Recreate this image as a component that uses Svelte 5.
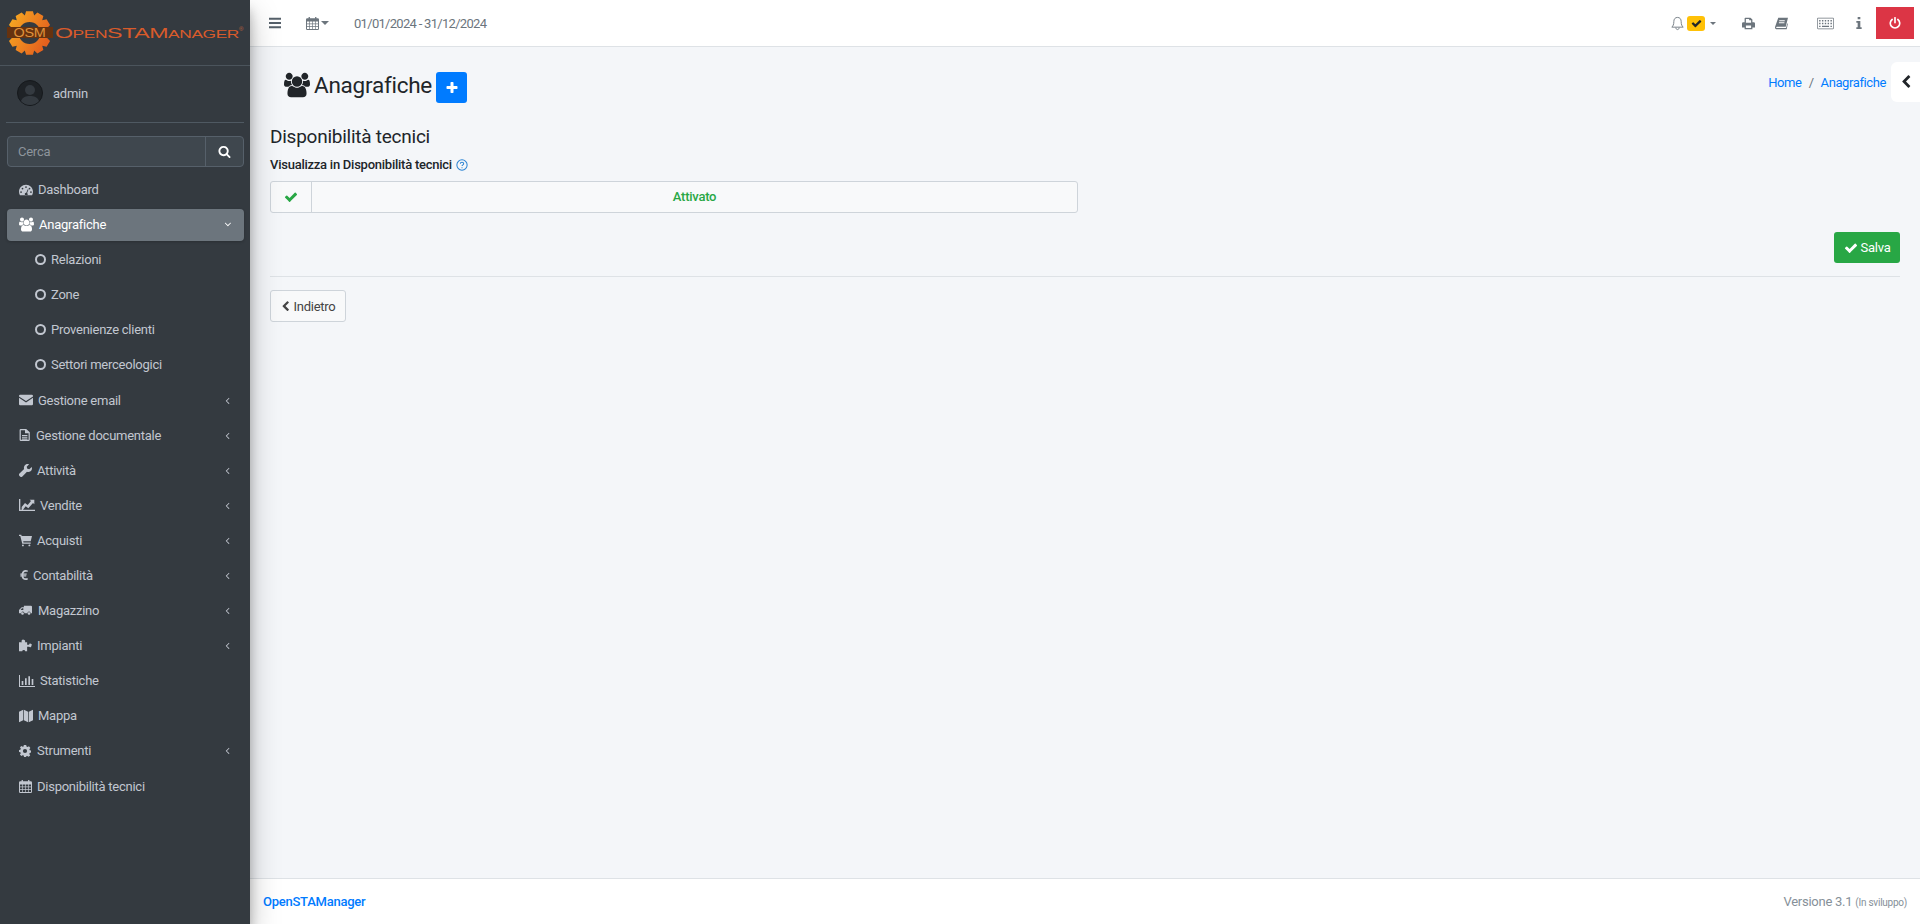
<script>
  const icons = {
    dashboard: { vb: '0 0 24 20', w: 14, d: 'M12 1C5.4 1 0 6.4 0 13c0 2.200.6 4.200 1.600 6h20.800c1-1.800 1.600-3.800 1.600-6 0-6.600-5.400-12-12-12zM12 3.500a1.500 1.500 0 1 1 0 3 1.500 1.500 0 0 1 0-3zM6 6a1.500 1.500 0 1 1 0 3 1.500 1.500 0 0 1 0-3zM3.500 12a1.500 1.500 0 1 1 0 3 1.500 1.500 0 0 1 0-3zM20.500 12a1.500 1.500 0 1 1 0 3 1.500 1.500 0 0 1 0-3zM18 6a1.500 1.500 0 1 1 0 3 1.500 1.500 0 0 1 0-3zM15 8.500l1.300.6-2.400 6a2.500 2.500 0 1 1-1.400-.5z' },
    users: { vb: '0 0 1920 1792', w: 15, d: 'M593 896q-162 5-265 128h-134q-82 0-138-40.500t-56-118.500q0-353 124-353 6 0 43.500 21t97.500 42.500 119 21.500q67 0 133-23-5 37-5 66 0 139 81 256zm1071 637q0 120-73 189.500t-194 69.500h-874q-121 0-194-69.500t-73-189.500q0-53 3.500-103.500t14-109 26.500-108.500 43-97.500 62-81 85.500-53.500 111.500-20q10 0 43 21.500t73 48 107 48 135 21.500 135-21.500 107-48 73-48 43-21.500q61 0 111.500 20t85.500 53.500 62 81 43 97.500 26.500 108.500 14 109 3.500 103.500zm-1024-1277q0 106-75 181t-181 75-181-75-75-181 75-181 181-75 181 75 75 181zm704 384q0 159-112.500 271.500t-271.500 112.500-271.500-112.500-112.500-271.500 112.500-271.500 271.500-112.500 271.500 112.500 112.500 271.500zm576 225q0 78-56 118.500t-138 40.500h-134q-103-123-265-128 81-117 81-256 0-29-5-66 66 23 133 23 59 0 119-21.500t97.500-42.500 43.500-21q124 0 124 353zm-128-609q0 106-75 181t-181 75-181-75-75-181 75-181 181-75 181 75 75 181z' },
    envelope: { vb: '0 0 24 20', w: 14, d: 'M2 1h20a2 2 0 0 1 2 2v.8l-12 8-12-8V3a2 2 0 0 1 2-2zM0 6.200l12 8 12-8V17a2 2 0 0 1-2 2H2a2 2 0 0 1-2-2z' },
    doc: { vb: '0 0 18 20', w: 12, d: 'M2 0h9l6 5.500V18a2 2 0 0 1-2 2H2a2 2 0 0 1-2-2V2a2 2 0 0 1 2-2zm0 2v16h13V7h-6V2zm2 8h9v1.500H4zm0 3h9v1.500H4zm0 3h9v1.500H4z' },
    wrench: { vb: '0 0 20 20', w: 13, d: 'M19.600 4.500l-3.800 3.700-3-1-1-3L15.500.5C13-.5 10 .2 8.500 2.500 7.400 4.200 7.300 6 7.900 7.700L.8 14.800a2.500 2.500 0 0 0 0 3.600l.8.800a2.500 2.500 0 0 0 3.600 0l7.100-7.100c1.700.6 3.800.4 5.400-.8 2-1.500 2.800-4.300 1.900-6.800z' },
    chart: { vb: '0 0 24 18', w: 16, d: 'M0 0h2v16h22v2H0zM4 12l5-6 4 3 5-6-2-2h7v7l-2-2-7 8-4-3-4 5H4z' },
    cart: { vb: '0 0 20 18', w: 13, d: 'M0 0h3.500l.6 2H20l-2 8H6.500l.4 2H18v2H5L2 2H0zM6 15a1.500 1.500 0 1 1 0 3 1.500 1.500 0 0 1 0-3zM16 15a1.500 1.500 0 1 1 0 3 1.500 1.500 0 0 1 0-3z' },
    truck: { vb: '0 0 24 18', w: 13, d: 'M9 0h13a2 2 0 0 1 2 2v12h-2.500a3 3 0 0 0-6 0h-5.500a3 3 0 0 0-6 0H1a1 1 0 0 1-1-1V8l5-5h4zM3 8h5V5H5.500zM6.500 12a2.500 2.500 0 1 1 0 5 2.500 2.500 0 0 1 0-5zM18.500 12a2.500 2.500 0 1 1 0 5 2.500 2.500 0 0 1 0-5z' },
    puzzle: { vb: '0 0 20 18', w: 13, d: 'M7 0a2.500 2.500 0 0 1 2 4h3.500v4h3a2 2 0 1 1 3.500 1.500A2 2 0 0 1 15.500 11h-3v7H9.500a2.200 2.200 0 1 0-4.500 0H0V4h4.500A2.500 2.500 0 0 1 7 0z' },
    bars: { vb: '0 0 24 18', w: 16, d: 'M0 0h1.500v16.500H24V18H0zM4 9h2.500v6H4zM9 5h2.500v10H9zM14 2h2.500v13H14zM19 6h2.500v9H19z' },
    map: { vb: '0 0 20 18', w: 14, d: 'M0 3l6-3v15l-6 3zM7 0l6 3v15l-6-3zM14 3l6-3v15l-6 3z' },
    cog: { vb: '0 0 20 20', w: 12, d: 'M8 0h4l.5 2.700 1.800.8L16.600 2 19 5l-1.700 2 .7 1.800L20 9.300v3.400l-2.200.6-.6 1.800 1.500 2.200-2.700 2.400-2.200-1.500-1.800.7L11.700 20H8.300l-.4-2.300-1.900-.7-2 1.500L1.500 16 3 13.900l-.7-1.700L0 11.700V8.300l2.300-.5.7-1.800L1.600 3.900 4 1.500l2.100 1.500 1.600-.7zM10 6.500a3.500 3.500 0 1 0 0 7 3.500 3.500 0 0 0 0-7z' },
    calendar: { vb: '0 0 20 20', w: 13, d: 'M4 0h2v2h8V0h2v2h2a2 2 0 0 1 2 2v14a2 2 0 0 1-2 2H2a2 2 0 0 1-2-2V4a2 2 0 0 1 2-2h2zM1.500 7v3h3.500V7zM6 7v3h3.500V7zM10.500 7v3H14V7zM15 7v3h3.500V7zM1.500 11v3h3.500v-3zM6 11v3h3.500v-3zM10.500 11v3H14v-3zM15 11v3h3.500v-3zM1.500 15v3.500h3.500V15zM6 15v3.500h3.500V15zM10.500 15v3.500H14V15zM15 15v3.500h3.500V15z' },
    check: { vb: '0 0 1792 1792', w: 14, d: 'M1671 566q0 40-28 68l-724 724-136 136q-28 28-68 28t-68-28l-136-136-362-362q-28-28-28-68t28-68l136-136q28-28 68-28t68 28l294 295 656-657q28-28 68-28t68 28l136 136q28 28 28 68z' },
    search: { vb: '0 0 1792 1792', w: 13, d: 'M1216 832q0-185-131.500-316.500t-316.500-131.500-316.500 131.500-131.500 316.500 131.500 316.500 316.500 131.500 316.500-131.500 131.500-316.500zm512 832q0 52-38 90t-90 38q-54 0-90-38l-343-342q-179 124-399 124-143 0-273.500-55.500t-225-150-150-225-55.500-273.500 55.500-273.500 150-225 225-150 273.500-55.500 273.500 55.500 225 150 150 225 55.500 273.500q0 220-124 399l343 343q37 37 37 90z' },
    plus: { vb: '0 0 1792 1792', w: 14, d: 'M1600 736v192q0 40-28 68t-68 28h-416v416q0 40-28 68t-68 28h-192q-40 0-68-28t-28-68v-416h-416q-40 0-68-28t-28-68v-192q0-40 28-68t68-28h416v-416q0-40 28-68t68-28h192q40 0 68 28t28 68v416h416q40 0 68 28t28 68z' },
    chevron: { vb: '0 0 1792 1792', w: 14, d: 'M1427 301l-531 531 531 531q19 19 19 45t-19 45l-166 166q-19 19-45 19t-45-19l-742-742q-19-19-19-45t19-45l742-742q19-19 45-19t45 19l166 166q19 19 19 45t-19 45z' },
    angle: { vb: '0 0 1792 1792', w: 11, d: 'M1203 544q0 13-10 23l-393 393 393 393q10 10 10 23t-10 23l-50 50q-10 10-23 10t-23-10l-466-466q-10-10-10-23t10-23l466-466q10-10 23-10t23 10l50 50q10 10 10 23z' },
    print: { vb: '0 0 20 18', w: 13, d: 'M5 0h8l3 3v4h2a2 2 0 0 1 2 2v6h-4v3H4v-3H0V9a2 2 0 0 1 2-2h2V1zM6 2v6h8V4h-3V2zM6 12v4h8v-4z' },
    book: { vb: '0 0 20 18', w: 13, d: 'M5 0h15l-3.500 14H3c-.8 0-1.200.5-1.200 1s.4 1 1.200 1h14l2-7.500.8 1L18 18H3c-2 0-3-1.500-3-3 0-.5.1-1 .3-1.500zM6.500 4v1.500H15V4zM6 7v1.500h8.500V7z' },
    keyboard: { vb: '0 0 24 16', w: 17, d: 'M1.500 0h21A1.500 1.500 0 0 1 24 1.500v13a1.500 1.500 0 0 1-1.500 1.500h-21A1.500 1.500 0 0 1 0 14.500v-13A1.500 1.500 0 0 1 1.500 0zM1 1v14h22V1zM3 3h2v2H3zM7 3h2v2H7zM11 3h2v2h-2zM15 3h2v2h-2zM19 3h2v2h-2zM3 7h2v2H3zM7 7h2v2H7zM11 7h2v2h-2zM15 7h2v2h-2zM19 7h2v2h-2zM3 11h2v2H3zM7 11h10v2H7zM19 11h2v2h-2z' },
    info: { vb: '-5 0 18 18', w: 12, d: 'M2 0h4v3.500H2zM0 6h6v9.500h2V18H0v-2.500h2V8.500H0z' },
    bars3: { vb: '0 0 16 14', w: 12, d: 'M0 0h16v2.600H0zM0 5.700h16v2.600H0zM0 11.400h16V14H0z' },
    euro: { vb: '0 0 16 18', w: 10, d: 'M11 0c1.500 0 3 .4 4 1l-.7 2.800C13.300 3.200 12.200 3 11.200 3 9 3 7.500 4.300 7 6.500h6l-.4 2H6.800v1.100h5.500l-.4 2H7c.5 2.200 2 3.400 4.300 3.400 1 0 2.200-.3 3-.7l.7 2.700c-1.200.7-2.700 1-4.100 1-4 0-6.700-2.500-7.200-6.400H1.200l.4-2h2v-1.100H1.200l.4-2h2.200C4.400 2.600 7.200 0 11 0z' }
  };

  const nav = [
    { label: 'Dashboard', icon: 'dashboard', gap: 5 },
    { label: 'Anagrafiche', icon: 'users', gap: 5, active: true, open: true, sub: ['Relazioni', 'Zone', 'Provenienze clienti', 'Settori merceologici'] },
    { label: 'Gestione email', icon: 'envelope', gap: 5, more: true },
    { label: 'Gestione documentale', icon: 'doc', gap: 5, more: true },
    { label: 'Attività', icon: 'wrench', gap: 5, more: true },
    { label: 'Vendite', icon: 'chart', gap: 5, more: true },
    { label: 'Acquisti', icon: 'cart', gap: 5, more: true },
    { label: 'Contabilità', icon: 'euro', gap: 4, more: true },
    { label: 'Magazzino', icon: 'truck', gap: 6, more: true },
    { label: 'Impianti', icon: 'puzzle', gap: 5, more: true },
    { label: 'Statistiche', icon: 'bars', gap: 5 },
    { label: 'Mappa', icon: 'map', gap: 5 },
    { label: 'Strumenti', icon: 'cog', gap: 6, more: true },
    { label: 'Disponibilità tecnici', icon: 'calendar', gap: 5 }
  ];

  // blocky 12 tooth gear for the logo
  function gearPath(teeth, outer, inner, hole) {
    const pts = [];
    const step = (Math.PI * 2) / teeth;
    for (let i = 0; i < teeth; i++) {
      const a = i * step - Math.PI / 2;
      for (const [r, da] of [[inner, -0.5], [outer, -0.3], [outer, 0.3], [inner, 0.5]]) {
        pts.push((r * Math.cos(a + da * step)).toFixed(2) + ' ' + (r * Math.sin(a + da * step)).toFixed(2));
      }
    }
    return `M${pts.join('L')}zM0 ${-hole}a${hole} ${hole} 0 1 0 0 ${hole * 2}a${hole} ${hole} 0 1 0 0 ${-hole * 2}z`;
  }
  const gear = gearPath(12, 22, 18, 11);
</script>

{#snippet icon(name, w)}
  <svg class="ico" viewBox={icons[name].vb} width={w ?? icons[name].w} height={w ?? icons[name].w} fill="currentColor" fill-rule="evenodd"><path d={icons[name].d} /></svg>
{/snippet}

<div class="page">
  <aside class="sidebar">
    <div class="brand">
      <svg class="logo" viewBox="0 0 250 65" width="250" height="65">
        <defs>
          <linearGradient id="gear" x1="0" y1="0" x2="1" y2="0.5">
            <stop offset="0" stop-color="#f9b122" />
            <stop offset="1" stop-color="#e4601e" />
          </linearGradient>
        </defs>
        <path d={gear} fill="url(#gear)" fill-rule="evenodd" transform="translate(29.500 33)" />
        <rect x="7" y="27" width="46" height="11" fill="#66320f" />
        <text x="13.500" y="37" class="osm" textLength="32" lengthAdjust="spacingAndGlyphs">OSM</text>
        <text x="55" y="37.500" class="wordmark" textLength="184" lengthAdjust="spacingAndGlyphs">O<tspan class="small">PEN</tspan>STAM<tspan class="small">ANAGER</tspan></text>
        <text x="239" y="31" class="reg">®</text>
      </svg>
    </div>

    <div class="user">
      <svg viewBox="0 0 26 26" width="26" height="26">
        <circle cx="13" cy="13" r="12.500" fill="#1e2226" stroke="#16191c" />
        <circle cx="13" cy="10" r="5" fill="#343a40" />
        <path d="M4 21c1.500-4 5-5 9-5s7.500 1 9 5a12 12 0 0 1-18 0z" fill="#343a40" />
      </svg>
      <span>admin</span>
    </div>

    <div class="search">
      <input placeholder="Cerca" />
      <button aria-label="Cerca">{@render icon('search')}</button>
    </div>

    <nav>
      {#each nav as item}
        <a class="link" class:active={item.active}>
          <span class="label" style:gap="{item.gap}px">{@render icon(item.icon)}<span>{item.label}</span></span>
          {#if item.open}
            <svg class="chev down" viewBox="0 0 1792 1792" width="11" height="11" fill="currentColor"><path d={icons.angle.d} /></svg>
          {:else if item.more}
            <svg class="chev" viewBox="0 0 1792 1792" width="11" height="11" fill="currentColor"><path d={icons.angle.d} /></svg>
          {/if}
        </a>
        {#each item.sub ?? [] as s}
          <a class="link sub"><i class="ring"></i><span>{s}</span></a>
        {/each}
      {/each}
    </nav>
  </aside>

  <div class="main">
    <header class="topbar">
      <div class="left">
        <span class="burger">{@render icon('bars3')}</span>
        <span class="cal">{@render icon('calendar')}<i class="caret"></i></span>
        <span class="period">01/01/2024 - 31/12/2024</span>
      </div>
      <div class="right">
        <span class="notif">
          <svg viewBox="0 0 16 18" width="13" height="15" fill="none" stroke="currentColor" stroke-width="1.100"><path d="M8 1.500c-3 0-4.500 2.200-4.500 5 0 4-1 5.500-2.500 7h14c-1.500-1.500-2.500-3-2.500-7 0-2.800-1.500-5-4.500-5zM6 14c0 1.500.8 2.500 2 2.500s2-1 2-2.500" /></svg>
          <b class="badge">{@render icon('check', 11)}</b>
          <i class="caret"></i>
        </span>
        <span class="tool t1">{@render icon('print')}</span>
        <span class="tool t2">{@render icon('book')}</span>
        <span class="tool t3">{@render icon('keyboard')}</span>
        <span class="tool t4">{@render icon('info')}</span>
        <span class="power">
          <svg viewBox="0 0 16 16" width="12" height="12" fill="none" stroke="currentColor" stroke-width="2.200" stroke-linecap="round"><path d="M8 1v6.500M4.200 3.300a6.300 6.300 0 1 0 7.600 0" /></svg>
        </span>
      </div>
    </header>

    <main class="content">
      <div class="head">
        <h1>
          <svg class="ico" viewBox={icons.users.vb} width="26" height="26" fill="currentColor"><path d={icons.users.d} /></svg>
          <span>Anagrafiche</span>
          <button class="add" aria-label="Aggiungi">{@render icon('plus')}</button>
        </h1>
        <div class="crumbs"><a>Home</a><em>/</em><a>Anagrafiche</a></div>
      </div>

      <div class="tab">{@render icon('chevron')}</div>

      <section class="form">
        <h4>Disponibilità tecnici</h4>
        <div class="field-label">
          <span>Visualizza in Disponibilità tecnici</span>
          <svg viewBox="0 0 14 14" width="12" height="12" fill="none" stroke="#2b83d3" stroke-width="1.200"><circle cx="7" cy="7" r="6" /><path d="M5 5.500c0-1.200 1-1.800 2-1.800s2 .6 2 1.700c0 1.400-2 1.400-2 2.900M7 9.500v1.200" /></svg>
        </div>
        <div class="toggle">
          <span class="toggle-ico">{@render icon('check', 14)}</span>
          <span class="toggle-txt">Attivato</span>
        </div>
        <div class="save-row">
          <button class="save">{@render icon('check', 14)}Salva</button>
        </div>
        <hr />
        <button class="back">{@render icon('chevron', 11)}Indietro</button>
      </section>
    </main>

    <footer class="foot">
      <a>OpenSTAManager</a>
      <span>Versione 3.1 <small>(In sviluppo)</small></span>
    </footer>
  </div>
</div>

<style>
  :global(body) {
    font-family: Roboto, "Noto Sans", sans-serif;
    font-size: 13px;
    letter-spacing: -0.25px;
    color: #212529;
    background: #f4f6f9;
  }
  .page {
    display: flex;
    height: 924px;
    overflow: hidden;
  }
  .ico {
    flex: none;
  }
  a {
    color: #007bff;
  }

  .sidebar {
    width: 250px;
    flex: none;
    background: #343a40;
    color: #c2c7d0;
    box-shadow: 0 14px 28px rgb(0 0 0 / 0.25), 0 10px 10px rgb(0 0 0 / 0.22);
    position: relative;
    z-index: 2;
  }
  .brand {
    height: 65px;
    border-bottom: 1px solid #4b545c;
  }
  .logo {
    display: block;
  }
  .osm {
    font: 12px "Liberation Sans", sans-serif;
    fill: #e0923c;
  }
  .wordmark {
    font: 14px "Liberation Sans", sans-serif;
    fill: #d95b2b;
  }
  .wordmark .small {
    font-size: 10.500px;
  }
  .reg {
    font: 6px "Liberation Sans", sans-serif;
    fill: #c0633c;
  }
  .user {
    margin: 0 6px;
    height: 57px;
    padding-left: 11px;
    display: flex;
    align-items: center;
    gap: 10px;
    padding-bottom: 2px;
    box-sizing: border-box;
    border-bottom: 1px solid #4f5962;
    color: #c2c7d0;
  }
  .search {
    margin: 13px 6px 0 7px;
    height: 31px;
    display: flex;
    border: 1px solid #56606a;
    border-radius: 4px;
    background: #3f474e;
    box-sizing: border-box;
  }
  .search input {
    flex: 1;
    min-width: 0;
    background: none;
    border: 0;
    outline: 0;
    padding: 0 10px;
    font: inherit;
    letter-spacing: inherit;
    color: #fff;
  }
  .search input::placeholder {
    color: #8e959c;
  }
  .search button {
    width: 38px;
    background: none;
    border: 0;
    border-left: 1px solid #56606a;
    color: #fff;
    padding: 0;
    display: flex;
    align-items: center;
    justify-content: center;
  }

  nav {
    margin: 5px 6px 0 7px;
    display: flex;
    flex-direction: column;
  }
  .link {
    height: 35.100px;
    display: flex;
    align-items: center;
    justify-content: space-between;
    padding: 0 12px;
    color: #c2c7d0;
    box-sizing: border-box;
  }
  .link .label {
    display: flex;
    align-items: center;
  }
  .link.active {
    background: #6c757d;
    color: #fff;
    border-radius: 4px;
    height: 32px;
    margin: 1.500px 0;
    box-shadow: 0 1px 3px rgb(0 0 0 / 0.2);
  }
  .chev {
    margin-right: -1px;
  }
  .chev.down {
    transform: rotate(-90deg);
  }
  .link.sub {
    justify-content: flex-start;
    padding-left: 28px;
    gap: 5px;
  }
  .ring {
    width: 11px;
    height: 11px;
    border: 2px solid #c2c7d0;
    border-radius: 50%;
    box-sizing: border-box;
  }

  .main {
    flex: 1;
    min-width: 0;
    display: flex;
    flex-direction: column;
    position: relative;
  }
  .topbar {
    height: 47px;
    flex: none;
    background: #fff;
    border-bottom: 1px solid #dee2e6;
    box-sizing: border-box;
    display: flex;
    justify-content: space-between;
    align-items: center;
    color: #6c757d;
  }
  .left {
    display: flex;
    align-items: center;
    color: #55606a;
  }
  .burger {
    margin-left: 19px;
    display: flex;
  }
  .cal {
    margin-left: 25px;
    display: flex;
    align-items: center;
    gap: 2px;
    color: #6c757d;
  }
  .caret {
    width: 0;
    height: 0;
    border: 4px solid transparent;
    border-top-color: currentColor;
    border-bottom: 0;
  }
  .period {
    margin-left: 25px;
    letter-spacing: -0.7px;
    color: #6c757d;
  }
  .right {
    display: flex;
    align-items: center;
    color: #6c757d;
  }
  .notif {
    display: flex;
    align-items: center;
    gap: 3px;
  }
  .badge {
    background: #ffc107;
    color: #212529;
    width: 18px;
    height: 15px;
    border-radius: 3px;
    display: flex;
    align-items: center;
    justify-content: center;
  }
  .notif .caret {
    margin-left: 2px;
    border-width: 3px;
    border-bottom: 0;
  }
  .tool {
    display: flex;
  }
  .t1 {
    margin-left: 26px;
  }
  .t2 {
    margin-left: 20px;
  }
  .t3 {
    margin-left: 29px;
  }
  .t4 {
    margin-left: 19px;
  }
  .power {
    margin: 0 6px 0 11px;
    width: 38px;
    height: 32px;
    background: #dc3545;
    color: #fff;
    display: flex;
    align-items: center;
    justify-content: center;
  }

  .content {
    flex: 1;
    padding: 0 20px;
    position: relative;
  }
  .head {
    display: flex;
    justify-content: space-between;
    align-items: center;
    height: 69px;
    padding-top: 6px;
    box-sizing: border-box;
  }
  h1 {
    margin: 0 0 0 14px;
    display: flex;
    align-items: center;
    gap: 4px;
    font-size: 22.500px;
    font-weight: 400;
  }
  .add {
    width: 31px;
    height: 31px;
    margin-top: 6px;
    border: 0;
    padding: 0;
    border-radius: 3px;
    background: #007bff;
    color: #fff;
    display: flex;
    align-items: center;
    justify-content: center;
  }
  .crumbs {
    display: flex;
    gap: 7px;
    margin-right: 14px;
    margin-bottom: 4px;
    letter-spacing: -0.4px;
    color: #6c757d;
  }
  .crumbs em {
    font-style: normal;
  }
  .tab {
    position: absolute;
    right: 0;
    top: 15px;
    width: 29px;
    height: 40px;
    background: #fff;
    border-radius: 6px 0 0 6px;
    display: flex;
    align-items: center;
    justify-content: center;
  }
  .form {
    display: flex;
    flex-direction: column;
    align-items: flex-start;
  }
  h4 {
    margin: 8px 0 0;
    font-size: 19px;
    line-height: 26px;
    font-weight: 400;
  }
  .field-label {
    margin-top: 6px;
    display: flex;
    align-items: center;
    gap: 4px;
    font-weight: 500;
    line-height: 18px;
  }
  .toggle {
    margin-top: 7px;
    width: 808px;
    height: 32px;
    display: flex;
    background: #f8f9fa;
    border: 1px solid #ced4da;
    border-radius: 3px;
    box-sizing: border-box;
    color: #28a745;
  }
  .toggle-ico {
    width: 40px;
    border-right: 1px solid #ced4da;
    display: flex;
    align-items: center;
    justify-content: center;
  }
  .toggle-txt {
    flex: 1;
    text-align: center;
    line-height: 30px;
    font-weight: 500;
  }
  .save-row {
    align-self: stretch;
    display: flex;
    justify-content: flex-end;
    margin-top: 19px;
  }
  .save {
    width: 66px;
    height: 31px;
    border: 0;
    border-radius: 3px;
    background: #28a745;
    color: #fff;
    font: inherit;
    letter-spacing: inherit;
    padding: 0;
    display: flex;
    align-items: center;
    justify-content: center;
    gap: 3px;
  }
  hr {
    align-self: stretch;
    margin: 13px 0 0;
    border: 0;
    border-top: 1px solid #dee2e6;
  }
  .back {
    margin-top: 13px;
    width: 76px;
    height: 32px;
    background: #f8f9fa;
    border: 1px solid #ced4da;
    border-radius: 3px;
    font: inherit;
    letter-spacing: inherit;
    color: #444;
    padding: 0;
    display: flex;
    align-items: center;
    justify-content: center;
    gap: 2px;
  }

  .foot {
    height: 46px;
    flex: none;
    background: #fff;
    border-top: 1px solid #dee2e6;
    box-sizing: border-box;
    padding: 0 13px;
    display: flex;
    align-items: center;
    justify-content: space-between;
    color: #869099;
  }
  .foot a {
    font-weight: 500;
  }
  .foot small {
    font-size: 10px;
  }
</style>
